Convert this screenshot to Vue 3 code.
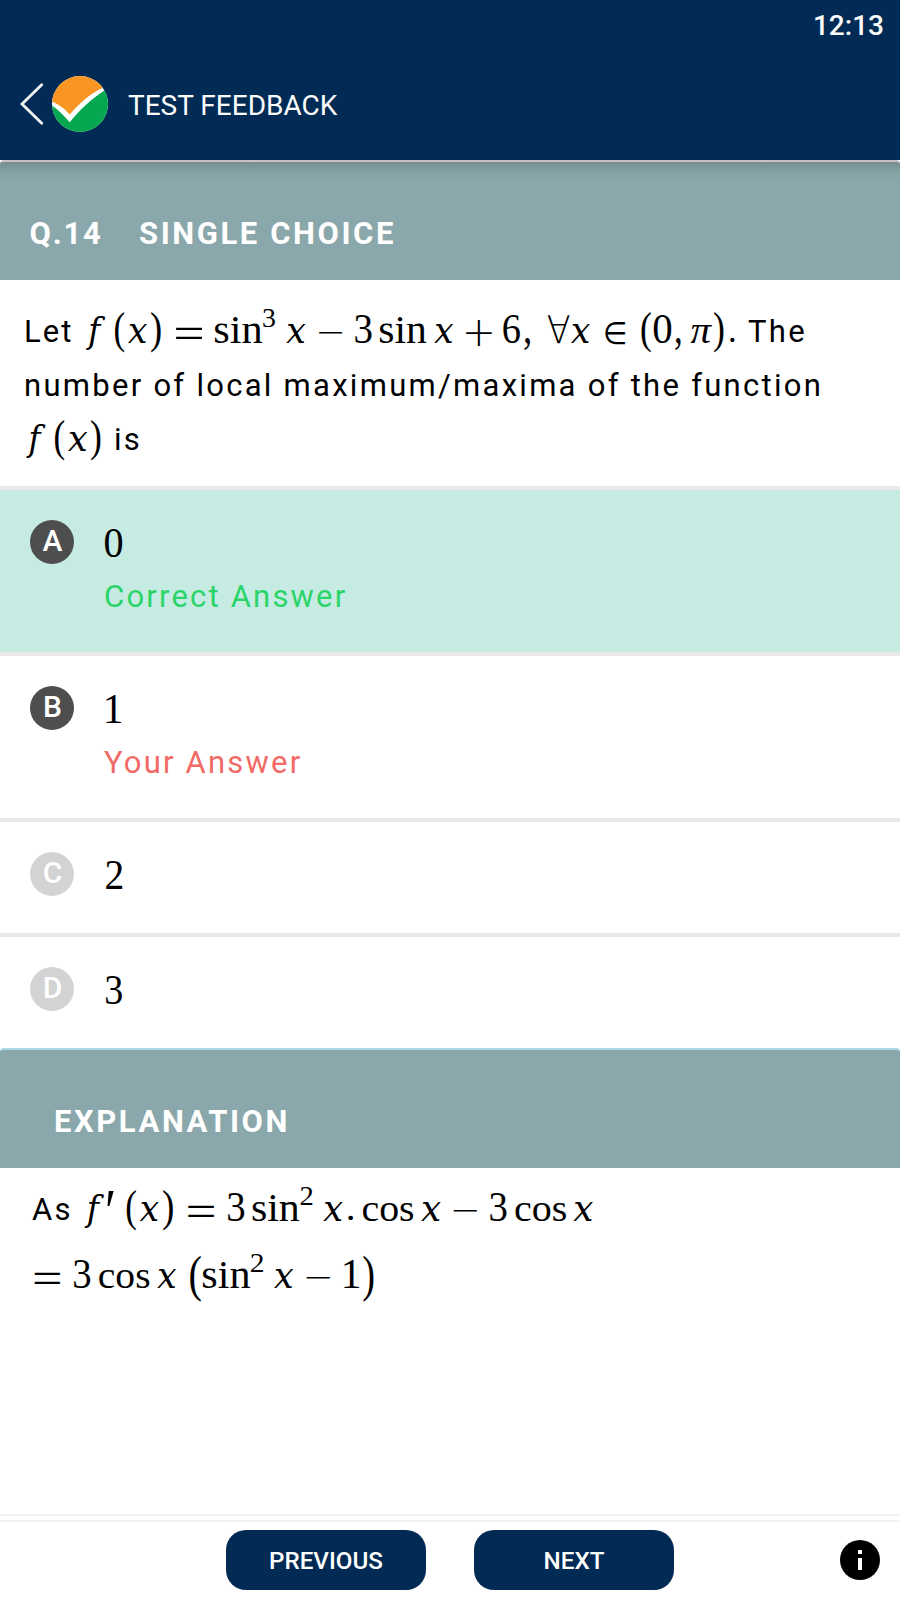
<script setup>
// Vertical ink extents relative to the baseline, by glyph kind.
const kinds = {
  digit: { family: 'serif', top: -27.4, bottom: 0.7 },
  one: { family: 'serif', top: -27.2, bottom: 0 },
  sup: { family: 'serif', top: -33.2, bottom: -15.6 },
  fn: { family: 'serif', top: -26.4, bottom: 0.5 },
  cos: { family: 'serif', top: -17.8, bottom: 0.5 },
  f: { family: 'italic', top: -26.4, bottom: 7.4 },
  x: { family: 'italic', top: -17.7, bottom: 0.5 },
  pi: { family: 'slanted', top: -17.7, bottom: 0.5 },
  paren: { family: 'serif', top: -30, bottom: 9.7 },
  tall: { family: 'serif', top: -32.3, bottom: 14 },
  eq: { family: 'thin', top: -15, bottom: -4 },
  minus: { family: 'thin', top: -10.4, bottom: -8.8 },
  plus: { family: 'thin', top: -23, bottom: 3 },
  comma: { family: 'serif', top: -4.3, bottom: 7.7 },
  dot: { family: 'serif', top: -4.3, bottom: 0 },
  set: { family: 'thin', top: -20.3, bottom: 1.7 },
  all: { family: 'thin', top: -27.4, bottom: 0.7 },
  prime: { family: 'serif', top: -29, bottom: -14.3 },
}
const fonts = {
  serif: '400 200px "Liberation Serif", serif',
  italic: '400 200px "DejaVu Math TeX Gyre", "DejaVu Serif", serif',
  slanted: 'italic 400 200px "Liberation Serif", serif',
  thin: '200 200px "DejaVu Sans", sans-serif',
}
const ctx = document.createElement('canvas').getContext('2d')

// Token: [text, kind, left, right]; scales the text so its ink fills the box.
function layout(tokens) {
  return tokens.map(([text, kind, left, right]) => {
    const k = kinds[kind]
    ctx.font = fonts[k.family]
    const m = ctx.measureText(text)
    const sx = (right - left) / (m.actualBoundingBoxRight + m.actualBoundingBoxLeft)
    const sy = (k.bottom - k.top) / (m.actualBoundingBoxAscent + m.actualBoundingBoxDescent)
    const ty = k.top + m.actualBoundingBoxAscent * sy
    const tx = left + m.actualBoundingBoxLeft * sx
    return { text, family: k.family, transform: `translate(${tx} ${ty}) scale(${sx} ${sy})` }
  })
}

const q1 = layout([
  ['𝑓', 'f', 86, 105], ['(', 'paren', 115, 124.3], ['𝑥', 'x', 128, 147], [')', 'paren', 151, 160.5],
  ['=', 'eq', 176, 202], ['sin', 'fn', 214.9, 262], ['3', 'sup', 263.3, 275], ['𝑥', 'x', 286.3, 305.5],
  ['−', 'minus', 319, 342], ['3', 'digit', 355.3, 371.7], ['sin', 'fn', 380, 426.300], ['𝑥', 'x', 434.3, 453.3],
  ['+', 'plus', 466, 491.7], ['6', 'digit', 503.3, 520], [',', 'comma', 524.3, 530], ['∀', 'all', 547.7, 569.7],
  ['𝑥', 'x', 571, 590], ['∈', 'set', 605.3, 624.7], ['(', 'paren', 641.3, 650.7], ['0', 'digit', 653.7, 671.3],
  [',', 'comma', 675.3, 680.7], ['π', 'pi', 690.7, 712], [')', 'paren', 714, 723.3], ['.', 'dot', 730.3, 734.5],
])
const q3 = layout([
  ['𝑓', 'f', 26.3, 45.3], ['(', 'paren', 55, 64.3], ['𝑥', 'x', 68, 87.3], [')', 'paren', 91, 100.3],
])
const e1 = layout([
  ['𝑓', 'f', 84.7, 104], ['′', 'prime', 107.3, 113.7], ['(', 'paren', 126.7, 136], ['𝑥', 'x', 139.7, 158.7],
  [')', 'paren', 163, 172.7], ['=', 'eq', 188.3, 214], ['3', 'digit', 227.9, 244.2], ['sin', 'fn', 252.6, 299.2],
  ['2', 'sup', 300.7, 312.3], ['𝑥', 'x', 323.3, 342.7], ['.', 'dot', 348.3, 353], ['cos', 'cos', 362.9, 413.2],
  ['𝑥', 'x', 421, 440.7], ['−', 'minus', 453.7, 477], ['3', 'digit', 490.2, 506.5], ['cos', 'cos', 515.3, 565.9],
  ['𝑥', 'x', 573.3, 593],
])
const e2 = layout([
  ['=', 'eq', 34.7, 60], ['3', 'digit', 73.9, 90.2], ['cos', 'cos', 99.2, 149.2], ['𝑥', 'x', 157.3, 176.3],
  ['(', 'tall', 190, 200.7], ['sin', 'fn', 203, 249.9], ['2', 'sup', 251, 263], ['𝑥', 'x', 274, 293.3],
  ['−', 'minus', 306.7, 330], ['1', 'one', 344.3, 359], [')', 'tall', 363.3, 373.3],
])
const options = [
  { key: 'A', value: layout([['0', 'digit', 3, 20.3]]), note: 'Correct Answer', state: 'correct' },
  { key: 'B', value: layout([['1', 'one', 4.3, 19]]), note: 'Your Answer', state: 'chosen' },
  { key: 'C', value: layout([['2', 'one', 4, 20]]), state: 'plain' },
  { key: 'D', value: layout([['3', 'digit', 4, 20]]), state: 'plain' },
]
</script>

<template>
  <div class="screen">
    <header class="top">
      <div class="status">12:13</div>
      <div class="bar">
        <svg class="back" width="24" height="44" viewBox="0 0 24 44">
          <path d="M21.700 2.700 L2 22 L21.700 41.300" fill="none" stroke="#f4f4f6" stroke-width="2.8" stroke-linecap="round" />
        </svg>
        <svg class="logo" width="56" height="56" viewBox="0 0 56 56">
          <defs><clipPath id="disc"><circle cx="28" cy="28" r="28" /></clipPath></defs>
          <g clip-path="url(#disc)">
            <path d="M0 0 H56 V56 H0 Z" fill="#fff" />
            <path d="M0 0 H56 V10 L50.500 12 C38 18 28 26.500 17.700 38.500 C13 33 7 28.500 0 25.500 Z" fill="#f99522" />
            <path d="M0 29.500 C7 34.500 12.500 40 17.700 46.300 C27 34.500 38.500 23.500 52 14.700 L56 12 V56 H0 Z" fill="#05a751" />
          </g>
        </svg>
        <h1>TEST FEEDBACK</h1>
      </div>
    </header>

    <section class="band first"><h2><span class="num">Q.14</span><span>SINGLE CHOICE</span></h2></section>
    <section class="question">
      <div class="line">
        <span class="word let">Let</span>
        <svg class="math" width="722" height="54" viewBox="26 -34.7 722 54">
          <text v-for="(g, i) in q1" :key="i" :class="g.family" :transform="g.transform">{{ g.text }}</text>
        </svg>
        <span class="word">The</span>
      </div>
      <div class="line"><span class="word">number of local maximum/maxima of the function</span></div>
      <div class="line">
        <svg class="math" width="90" height="54" viewBox="24 -34.7 90 54">
          <text v-for="(g, i) in q3" :key="i" :class="g.family" :transform="g.transform">{{ g.text }}</text>
        </svg>
        <span class="word">is</span>
      </div>
    </section>

    <section v-for="o in options" :key="o.key" class="option" :class="o.state">
      <span class="badge">{{ o.key }}</span>
      <div class="body">
        <svg class="math" width="30" height="54" viewBox="0 -34.7 30 54">
          <text v-for="(g, i) in o.value" :key="i" :class="g.family" :transform="g.transform">{{ g.text }}</text>
        </svg>
        <span v-if="o.note" class="note">{{ o.note }}</span>
      </div>
    </section>

    <section class="band second"><h2>EXPLANATION</h2></section>
    <section class="explanation">
      <div class="line">
        <span class="word as">As</span>
        <svg class="math" width="600" height="54" viewBox="80 -34.7 600 54">
          <text v-for="(g, i) in e1" :key="i" :class="g.family" :transform="g.transform">{{ g.text }}</text>
        </svg>
      </div>
      <div class="line">
        <svg class="math" width="400" height="54" viewBox="32 -34.7 400 54">
          <text v-for="(g, i) in e2" :key="i" :class="g.family" :transform="g.transform">{{ g.text }}</text>
        </svg>
      </div>
    </section>

    <footer class="footer">
      <span></span>
      <button>PREVIOUS</button>
      <button>NEXT</button>
      <svg class="info" width="40" height="40" viewBox="0 0 40 40">
        <circle cx="20" cy="20" r="20" />
        <path d="M18 10h4v4h-4zM18 18h4v12h-4z" fill="#fff" />
      </svg>
    </footer>
  </div>
</template>

<style>
body { margin: 0; background: #fff; }
</style>
<style scoped>
* { box-sizing: border-box; }
.screen { width: 900px; height: 1600px; display: flex; flex-direction: column; overflow: hidden; background: #fff; color: #000; font-family: Roboto, sans-serif; }
.top { height: 160px; flex: none; background: #012b54; color: #fcfcfd; }
.status { height: 48px; padding: 9px 16px 0 0; text-align: right; font-size: 28px; line-height: 33px; font-weight: 500; }
.bar { height: 112px; display: flex; align-items: center; padding-left: 20px; }
.logo { margin-left: 8px; }
h1 { margin: 4px 0 0 20px; font-size: 28px; line-height: 32px; font-weight: 400; }
.band { height: 120px; flex: none; border-top: 2px solid; border-radius: 4px 4px 0 0; background: #8aa8ab; color: #fff; }
.band h2 { margin: 0; font-size: 31px; line-height: 36px; font-weight: 700; letter-spacing: 2.58px; display: flex; }
.first { border-color: #c9c0c4; background: linear-gradient(#748d90, #819ea1 8px, #8aa8ab 18px); }
.first h2 { padding: 54px 0 0 29.5px; }
.num { width: 109.500px; letter-spacing: 1.8px; }
.second { border-color: #add8e6; }
.second h2 { padding: 54px 0 0 54px; }
.question { height: 206px; flex: none; padding: 28px 0 0 24px; }
.line { height: 54px; display: flex; align-items: flex-start; }
.word { font-size: 31px; line-height: 36px; letter-spacing: 2.28px; margin-top: 6px; white-space: pre; }
.let { width: 2px; letter-spacing: 2px; }
.math { flex: none; display: block; overflow: visible; }
.math text { fill: #000; font-size: 200px; }
.math .serif { font-family: "Liberation Serif", serif; }
.math .italic { font-family: "DejaVu Math TeX Gyre", "DejaVu Serif", serif; }
.math .slanted { font-family: "Liberation Serif", serif; font-style: italic; }
.math .thin { font-family: "DejaVu Sans", sans-serif; font-weight: 200; }
.option { flex: none; border-top: 4px solid #e9e9e9; height: 115px; padding: 30px 0 0 30px; display: flex; }
.correct, .chosen { height: 166px; }
.correct { background: #c5ebe3; }
.badge { width: 44px; height: 44px; border-radius: 50%; background: #d3d3d3; color: #fff; font-size: 30px; line-height: 42px; font-weight: 500; text-align: center; padding-left: 1px; }
.correct .badge, .chosen .badge { background: #4e4e4e; }
.body { margin-left: 28px; margin-top: 1.5px; display: flex; flex-direction: column; }
.note { font-size: 31px; line-height: 36px; letter-spacing: 2.2px; margin-left: 2px; margin-top: 3px; }
.correct .note { color: #2bd468; }
.chosen .note { color: #f16a66; }
.explanation { flex: 1; padding: 18px 0 0 32px; }
.explanation .line { height: 66.500px; }
.as { width: 48px; }
.footer { height: 86px; flex: none; border-top: 2px solid #f3f3f3; display: grid; grid-template-columns: 226px 200px 200px 1fr; padding-top: 4px; align-items: start; align-content: start; }
.footer::before { content: ""; grid-column: 1 / -1; height: 2px; background: #f3f3f3; }
button { margin-top: 8px; width: 200px; height: 60px; border: 0; border-radius: 20px; background: #012b54; color: #fff; font: 500 24.2px/60px Roboto, sans-serif; padding: 1px 0 0; }
button + button { margin-left: 48px; }
.info { margin-top: 18px; margin-right: 20px; justify-self: end; }
</style>
